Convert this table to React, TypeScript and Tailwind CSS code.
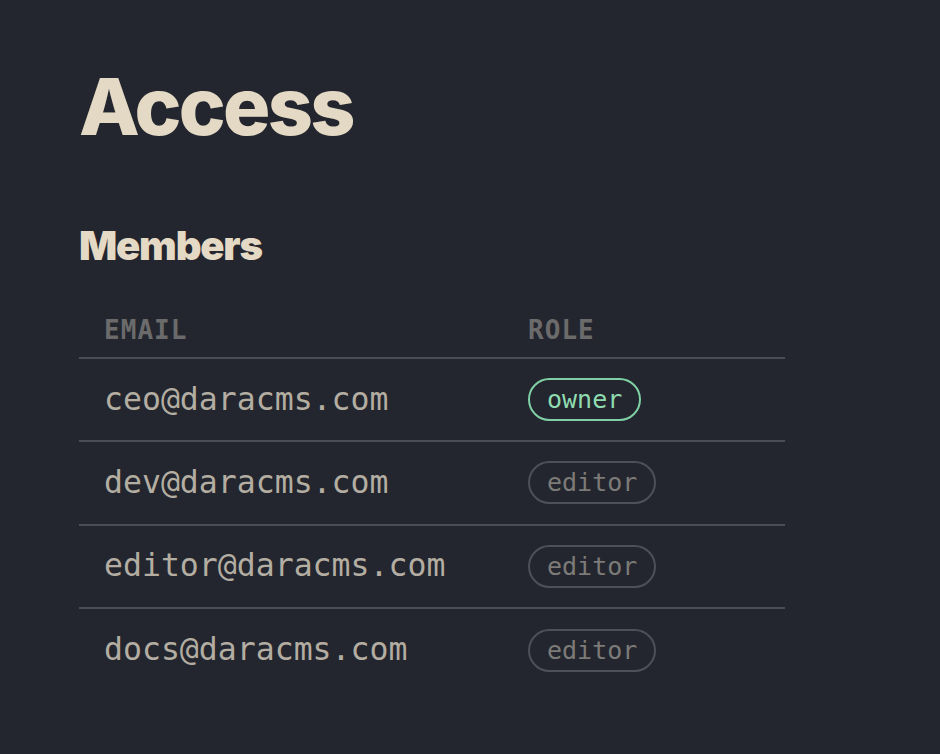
const members = [
  { email: "ceo@daracms.com", role: "owner" },
  { email: "dev@daracms.com", role: "editor" },
  { email: "editor@daracms.com", role: "editor" },
  { email: "docs@daracms.com", role: "editor" },
];

const mono = "font-['DejaVu_Sans_Mono','Liberation_Mono',monospace]";

export default function App() {
  return (
    <div className="min-h-[754px] w-full bg-[#23262e] pl-[79px] pt-[67px]">
      <h1 className="font-['Inter',sans-serif] text-[79px] font-extrabold leading-none tracking-[-0.035em] text-[#e3d9c4]">
        Access
      </h1>

      <h2 className="mt-[80px] font-['Inter',sans-serif] text-[40px] font-black leading-none tracking-[-0.03em] text-[#e3d9c4]">
        Members
      </h2>

      <table className={`mt-[51px] w-[706px] border-collapse ${mono}`}>
        <thead>
          <tr className="border-b-2 border-[#4a4d55]">
            <th className="w-[449px] pb-[14px] pl-[25px] text-left text-[26px] font-bold leading-none tracking-[0.04em] text-[#6b6b6b]">
              EMAIL
            </th>
            <th className="pb-[14px] text-left text-[26px] font-bold leading-none tracking-[0.04em] text-[#6b6b6b]">
              ROLE
            </th>
          </tr>
        </thead>
        <tbody>
          {members.map((m, i) => (
            <tr
              key={m.email}
              className={i < members.length - 1 ? "border-b-2 border-[#4a4d55]" : ""}
            >
              <td className="h-[83.3px] pl-[25px] text-[31.5px] leading-none text-[#b3ada2]">
                {m.email}
              </td>
              <td className="h-[83.3px]">
                {m.role === "owner" ? (
                  <span className="inline-flex h-[43px] items-center rounded-full border-2 border-[#7fd0a4] px-[17px] text-[25px] leading-none text-[#8fdcb0]">
                    {m.role}
                  </span>
                ) : (
                  <span className="inline-flex h-[43px] items-center rounded-full border-2 border-[#4d5058] px-[17px] text-[25px] leading-none text-[#7d7b78]">
                    {m.role}
                  </span>
                )}
              </td>
            </tr>
          ))}
        </tbody>
      </table>
    </div>
  );
}
